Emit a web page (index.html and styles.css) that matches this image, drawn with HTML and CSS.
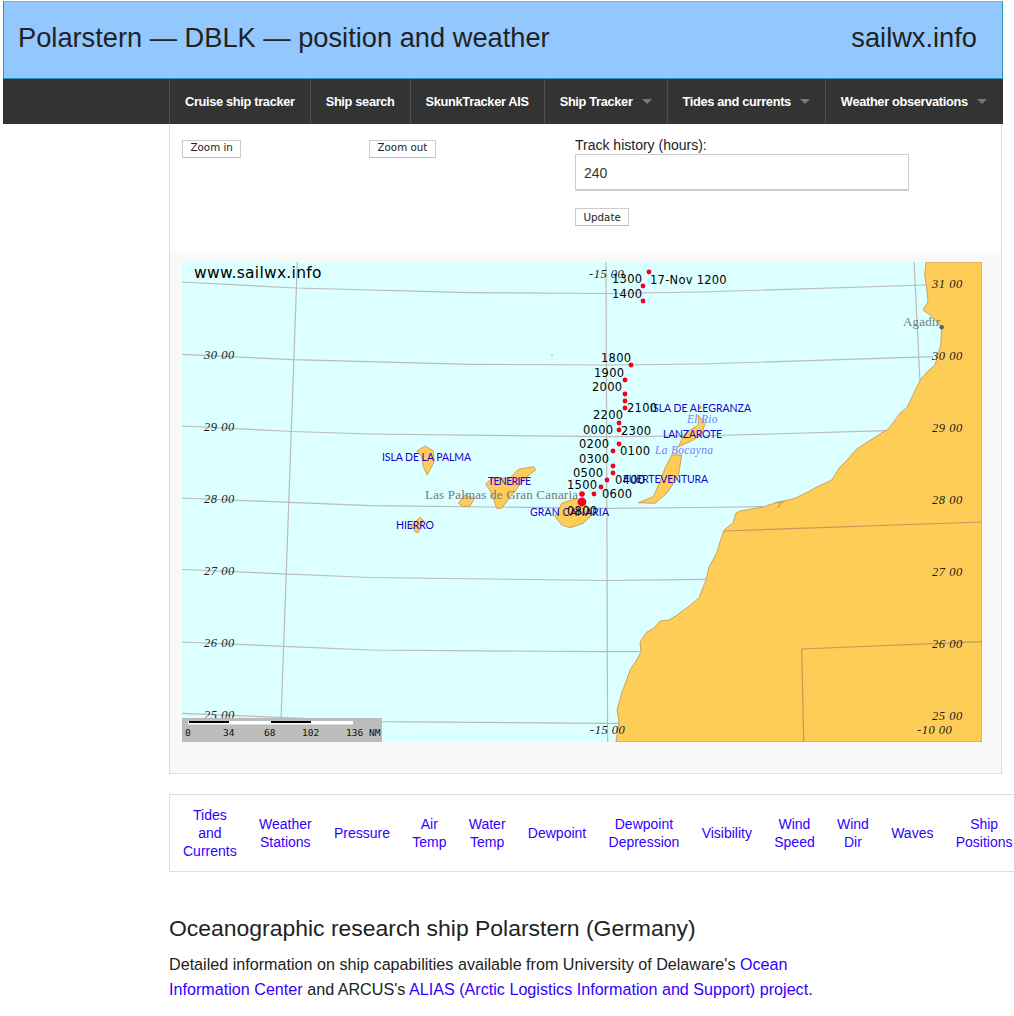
FILE: index.html
```html
<!DOCTYPE html>
<html lang="en">
<head>
<meta charset="utf-8">
<title>Polarstern — DBLK — position and weather</title>
<link rel="stylesheet" href="styles.css">
</head>
<body>
<div class="page">
  <header class="masthead">
    <h1 class="title">Polarstern — DBLK — position and weather</h1>
    <div class="brand">sailwx.info</div>
  </header>
  <nav class="topbar">
    <a class="nav-item" href="#">Cruise ship tracker</a>
    <a class="nav-item" href="#">Ship search</a>
    <a class="nav-item" href="#">SkunkTracker AIS</a>
    <a class="nav-item has-menu" href="#">Ship Tracker</a>
    <a class="nav-item has-menu" href="#">Tides and currents</a>
    <a class="nav-item has-menu" href="#">Weather observations</a>
  </nav>
  <main class="content">
    <section class="mapbox">
      <form class="controls">
        <div class="col-in"><button type="button" class="btn btn-top">Zoom in</button></div>
        <div class="col-out"><button type="button" class="btn btn-top">Zoom out</button></div>
        <div class="col-track">
          <label class="track-label" for="hours">Track history (hours):</label>
          <input id="hours" class="track-input" type="text" value="240">
          <button type="button" class="btn">Update</button>
        </div>
      </form>
      <div class="panel">
        <svg class="map" width="800" height="480" viewBox="182 262 800 480" xmlns="http://www.w3.org/2000/svg">
          <rect class="sea" x="182" y="262" width="800" height="480"/>
          <g class="grid">
            <path d="M182 282L296 288L470 292.7L607 293.5L700 292L926 285"/>
            <path d="M182 354.3L293 359.7L470 364.3L607 365L700 364L933 356.7"/>
            <path d="M182 426L293 431.5L370 434L607 436.7L700 436L887 430.7"/>
            <path d="M182 498L370 505.7L607 508.3L700 507.5L763 506.7"/>
            <path d="M182 569.5L370 577.5L607 580.5L706 579.3"/>
            <path d="M182 642L370 650L600 651.7L640 651.7"/>
            <path d="M182 713.3L382 721.7L608 723.3L619 723.3"/>
            <path d="M297.3 262L293.3 375L281 720"/>
            <path d="M606 262L607 550L607.6 742"/>
            <path d="M914 262L920 382"/>
          </g>
          <path class="land" d="M926 262L924.7 275L926.7 288L928 302L923 310L930 315L936 321L941.7 327L941 340L940.7 345L937 358L935 365L928 371L921.7 378L916.7 387L911 399L906.7 408L900 413L896.7 418L888 429L872 439L856.7 449L848 459L840 467L831.7 480L816.7 487L806 493L793 499L778 502L763 507L740 511L736 513L733 523L724 530L720 542L716.7 553L709 567L706 580L702 590L699 598L688 607L677 615L669 620L660 621L654 628L647 632L640 642L641 652L636 661L630 670L626 682L622 692L617 710L619 722L616 742L982 742L982 262Z"/>
          <path class="border" d="M724 531L982 522"/>
          <path class="border" d="M982 641.7L801.7 649L803.7 742"/>
          <path class="border" d="M781 502L778 508M775 503L784 502"/>
          <path class="land" d="M416.7 451L425 446L433.3 450.7L434.3 461.7L427.3 475L423.3 466.7L421.7 456.7Z"/>
          <path class="land" d="M485.7 484L491.7 478.3L510 478.3L518.3 469.3L533.3 466.7L535.7 470L526.7 476.7L518.3 486.7L506.7 501.7L501.7 508.3L496.7 508.3L491.7 493.3Z"/>
          <path class="land" d="M458.3 503.3L465 495L474.3 498.3L470 506L463.3 506.7Z"/>
          <path class="land" d="M410 527L420 517.3L423.3 520L418.3 532.7L415 531.7L413.3 527.5Z"/>
          <path class="land" d="M555 516.7L561.7 503.3L576.7 498.3L590 508.3L590 516.7L583.3 523.3L570 527.7L561.7 525Z"/>
          <path class="land" d="M698.3 415L705 423.3L701.7 435L690 441.7L678.3 446.7L685 433.3L698.3 425Z"/>
          <path class="land" d="M671.7 455L681.7 455L678.3 476.7L666.7 493.3L655 503.3L638.3 502.7L653.3 496.7L659.3 483.3L665 468.3Z"/>
          <circle class="speck" cx="700" cy="407.5" r="1.6"/>
          <circle class="speck" cx="552" cy="355" r="0.8"/>

          <g class="city">
            <text x="425" y="498.5" textLength="153">Las Palmas de Gran Canaria</text>
            <text x="903" y="325.7" textLength="37">Agadir</text>
          </g>
          <circle class="city-dot" cx="941.7" cy="327.3" r="2.2"/>

          <g class="grat">
            <text x="932" y="288">31 00</text>
            <text x="932" y="360">30 00</text>
            <text x="932" y="432">29 00</text>
            <text x="932" y="504">28 00</text>
            <text x="932" y="576">27 00</text>
            <text x="932" y="648">26 00</text>
            <text x="932" y="720">25 00</text>
            <text x="204" y="359">30 00</text>
            <text x="204" y="431">29 00</text>
            <text x="204" y="503">28 00</text>
            <text x="204" y="575">27 00</text>
            <text x="204" y="647">26 00</text>
            <text x="204" y="719">25 00</text>
            <text x="589" y="278">-15 00</text>
            <text x="590" y="734">-15 00</text>
            <text x="917" y="734">-10 00</text>
          </g>

          <g class="sea-name">
            <text x="687" y="423">El Rio</text>
            <text x="655" y="454">La Bocayna</text>
          </g>
          <g class="place">
            <text x="382" y="461" textLength="89">ISLA DE LA PALMA</text>
            <text x="650" y="412" textLength="101">ISLA DE ALEGRANZA</text>
            <text x="663" y="438" textLength="59">LANZAROTE</text>
            <text x="623" y="483" textLength="85">FUERTEVENTURA</text>
            <text x="488" y="485" textLength="43">TENERIFE</text>
            <text x="530" y="516" textLength="79">GRAN CANARIA</text>
            <text x="396" y="529" textLength="38">HIERRO</text>
          </g>

          <g class="track">
            <circle cx="649" cy="272" r="2.4"/><circle cx="643" cy="286" r="2.4"/><circle cx="643" cy="301" r="2.4"/>
            <circle cx="631" cy="365" r="2.4"/><circle cx="625" cy="380" r="2.4"/><circle cx="625" cy="394" r="2.4"/>
            <circle cx="625" cy="401" r="2.4"/><circle cx="625" cy="408" r="2.4"/><circle cx="619" cy="423" r="2.4"/>
            <circle cx="619" cy="430" r="2.4"/><circle cx="619" cy="444" r="2.4"/><circle cx="613" cy="451" r="2.4"/>
            <circle cx="613" cy="466" r="2.4"/><circle cx="613" cy="473" r="2.4"/><circle cx="607" cy="480" r="2.4"/>
            <circle cx="601" cy="487" r="2.4"/><circle cx="594" cy="494" r="2.4"/><circle cx="582" cy="494" r="2.8"/>
            <circle cx="582" cy="502" r="4.4"/>
          </g>
          <g class="hour">
            <text x="612" y="283">1300</text>
            <text x="650" y="284">17-Nov 1200</text>
            <text x="612" y="298">1400</text>
            <text x="601" y="362">1800</text>
            <text x="594" y="377">1900</text>
            <text x="592" y="391">2000</text>
            <text x="627" y="412">2100</text>
            <text x="593" y="419">2200</text>
            <text x="583" y="434">0000</text>
            <text x="621" y="435">2300</text>
            <text x="579" y="448">0200</text>
            <text x="620" y="455">0100</text>
            <text x="579" y="463">0300</text>
            <text x="573" y="477">0500</text>
            <text x="615" y="484">0400</text>
            <text x="567" y="489">1500</text>
            <text x="602" y="498">0600</text>
            <text x="567" y="515">0800</text>
          </g>
          <text class="stamp" x="194" y="278">www.sailwx.info</text>

          <g class="scale">
            <rect class="scale-bg" x="182" y="718" width="200" height="24"/>
            <rect class="scale-white" x="188" y="721" width="165" height="3.5"/>
            <rect class="scale-black" x="189" y="721" width="40" height="2"/>
            <rect class="scale-black" x="271" y="721" width="40" height="2"/>
            <text x="185" y="736">0</text>
            <text x="223" y="736">34</text>
            <text x="264" y="736">68</text>
            <text x="302" y="736">102</text>
            <text x="346" y="736">136</text>
            <text x="369" y="736">NM</text>
          </g>
        </svg>
      </div>
    </section>

    <div class="links">
      <a class="link-cell" href="#">Tides<br>and<br>Currents</a>
      <a class="link-cell" href="#">Weather<br>Stations</a>
      <a class="link-cell" href="#">Pressure</a>
      <a class="link-cell" href="#">Air<br>Temp</a>
      <a class="link-cell" href="#">Water<br>Temp</a>
      <a class="link-cell" href="#">Dewpoint</a>
      <a class="link-cell" href="#">Dewpoint<br>Depression</a>
      <a class="link-cell" href="#">Visibility</a>
      <a class="link-cell" href="#">Wind<br>Speed</a>
      <a class="link-cell" href="#">Wind<br>Dir</a>
      <a class="link-cell" href="#">Waves</a>
      <a class="link-cell" href="#">Ship<br>Positions</a>
    </div>

    <h2 class="ship-heading">Oceanographic research ship Polarstern (Germany)</h2>
    <p class="ship-info">Detailed information on ship capabilities available from University of Delaware's <a href="#">Ocean Information Center</a> and ARCUS's <a href="#">ALIAS (Arctic Logistics Information and Support) project</a>.</p>
  </main>
</div>
</body>
</html>
```
FILE: styles.css
```css
* { box-sizing: border-box; }
html, body { margin: 0; padding: 0; overflow-x: hidden; background: #fff; }
body { font-family: "Liberation Sans", Arial, sans-serif; color: #222; }
a { color: #3300ff; text-decoration: none; }

.page { margin-left: 3px; padding-top: 1px; width: 1000px; }

.masthead {
  height: 78px;
  background: #93c8ff;
  border: 1px solid #2f93b5;
  border-top-color: #8aa9c0;
  display: flex;
  align-items: center;
  justify-content: space-between;
  padding: 0 25px 4px 14px;
}
.title, .brand { margin: 0; font-size: 27.25px; font-weight: normal; color: #222; }

.topbar {
  height: 45px;
  background: #333;
  display: flex;
  padding-left: 166px;
}
.nav-item {
  flex: none;
  display: flex;
  align-items: center;
  padding: 0 15px;
  border-left: 1px solid #4e4e4e;
  color: #fff;
  font-size: 12.8px;
  font-weight: bold;
  letter-spacing: -0.33px;
  white-space: nowrap;
}
.nav-item.has-menu::after {
  content: "";
  margin-left: 9px;
  border: 5px solid transparent;
  border-top: 5px solid #777;
  border-bottom-width: 0;
}

.content { margin-left: 166px; width: 833px; }

.mapbox {
  border: 1px solid #ddd;
  border-top: 0;
}
.controls {
  height: 129px;
  display: flex;
  padding: 14px 12px 0;
  font-size: 14px;
}
.col-in { width: 187px; }
.col-out { width: 206px; }
.col-track { display: flex; flex-direction: column; align-items: flex-start; }
.btn {
  height: 18px;
  padding: 0 7.5px 1px;
  background: #fff;
  border: 1px solid #ccc;
  border-bottom-color: #bbb;
  font-family: "DejaVu Sans", sans-serif;
  font-size: 10.3px;
  color: #222;
  border-radius: 0;
}
.btn-top { padding-bottom: 3px; }
.track-label { height: 16px; line-height: 14px; font-size: 14px; color: #222; }
.track-input {
  width: 334px;
  height: 37px;
  margin-bottom: 17px;
  padding: 2px 8px 0;
  border: 1px solid #ccc;
  border-width: 1px 1px 2px;
  font-family: "Liberation Sans", sans-serif;
  font-size: 14px;
  color: #333;
}

.panel { background: #f9f9f9; padding: 9px 18px 31px 12px; }
.map { display: block; }
.sea { fill: #dcffff; }
.land { fill: #fdcd57; stroke: #c9985a; stroke-width: 0.9; stroke-linejoin: round; }
.grid path { fill: none; stroke: #bbb; stroke-width: 1.2; }
.border { fill: none; stroke: #c8975a; stroke-width: 1.2; }
.speck { fill: #f09a30; }
.city text { font-family: "Liberation Serif", serif; font-size: 13px; fill: #777; }
.city-dot { fill: #556070; }
.grat text { font-family: "Liberation Serif", serif; font-style: italic; font-size: 12.5px; fill: #222; letter-spacing: 0.5px; }
.sea-name text { font-family: "Liberation Serif", serif; font-style: italic; font-size: 11.5px; fill: #6f82ff; letter-spacing: 0.3px; }
.place text { font-family: "Lato", sans-serif; font-size: 10.5px; fill: #1a00d0; }
.track circle { fill: #f5001e; }
.hour text { font-family: "DejaVu Sans", sans-serif; font-size: 11.5px; fill: #000; letter-spacing: 0.25px; }
.stamp { font-family: "DejaVu Sans", sans-serif; font-size: 15.5px; fill: #000; letter-spacing: 0.28px; }
.scale-bg { fill: #bcbcbc; }
.scale-white { fill: #fff; }
.scale-black { fill: #000; }
.scale text { font-family: "DejaVu Sans Mono", monospace; font-size: 9.5px; fill: #111; }

.links {
  margin-top: 20px;
  width: 860px;
  height: 78px;
  display: flex;
  align-items: center;
  padding-left: 1px;
  border: 1px solid #ddd;
  border-right: 0;
}
.link-cell {
  padding: 0 11.15px;
  font-size: 14px;
  line-height: 18px;
  text-align: center;
  white-space: nowrap;
}
.link-cell:first-child { padding-left: 12px; }

.ship-heading { margin: 42px 0 0; font-size: 22.95px; line-height: 28px; font-weight: normal; color: #222; }
.ship-info { margin: 10px 0 0; font-size: 16.15px; line-height: 25px; color: #222; width: 660px; }
```
